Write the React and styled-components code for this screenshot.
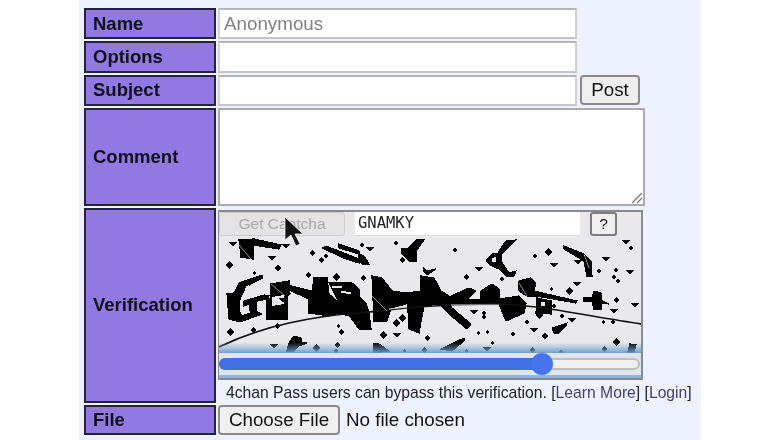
import React from "react";
import styled, { createGlobalStyle } from "styled-components";

const Global = createGlobalStyle`
  html, body { margin: 0; padding: 0; background: #fff; height: 440px; overflow: hidden; }
  * { box-sizing: border-box; }
`;

const Page = styled.div`
  display: flex;
  padding-left: 79px;
  height: 440px;
  font-family: "Liberation Sans", Arial, sans-serif;
  color: #222;
  position: relative;
`;
const Panel = styled.form`
  width: 622px;
  height: 440px;
  overflow: hidden;
  background: #eef2ff;
  padding: 8px 0 0 5px;
  display: flex;
  flex-direction: column;
  gap: 2px;
  filter: blur(0.4px);
`;
const Row = styled.div`
  display: flex;
  gap: 2px;
  height: ${(p) => p.$h}px;
  flex: none;
`;
const Label = styled.div`
  width: 132px;
  flex: none;
  display: flex;
  align-items: center;
  padding-left: 7px;
  background: #9178e2;
  border: 2px solid #23233a;
  font-size: 18.5px;
  font-weight: 700;
  color: #10101c;
`;
const Input = styled.input`
  width: ${(p) => p.$w}px;
  height: 100%;
  border: 2px solid;
  border-color: #b4b4b4 #cfcfcf #c4c4c4 #d4d4d4;
  background: #fff;
  padding: 0 4px;
  font-family: inherit;
  font-size: 18.8px;
  outline: none;
  &::placeholder { color: #808080; opacity: 1; }
`;
const PostButton = styled.button`
  width: 60px;
  height: 30px;
  margin-left: 1px;
  border: 2px solid #8a8a8a;
  border-radius: 4px;
  background: #efefef;
  font-family: inherit;
  font-size: 18.8px;
  color: #111;
  padding: 0;
`;
const TextArea = styled.div`
  width: 427px;
  height: 98px;
  border: 2px solid #ababab;
  background: #fff;
  position: relative;
`;
const Grip = styled.svg`
  position: absolute;
  right: 0;
  bottom: 0;
`;
const VerifyCell = styled.div`
  display: flex;
  flex-direction: column;
  padding-top: 2px;
`;
const CaptchaBox = styled.div`
  width: 425px;
  height: 173px;
  border: 2px solid #868a90;
  border-left-width: 1px;
  background: #e9e9eb;
  display: flex;
  flex-direction: column;
`;
const CaptchaBar = styled.div`
  display: flex;
  gap: 10px;
  height: 24px;
  flex: none;
`;
const GetButton = styled.button`
  width: 126px;
  height: 24px;
  border: 1px solid #cdcdcd;
  border-radius: 3px;
  background: #e3e3e3;
  color: #a9a9a9;
  font-family: inherit;
  font-size: 15.5px;
  padding: 0;
`;
const CodeInput = styled.input`
  width: 225px;
  height: 24px;
  border: none;
  border-bottom: 1px solid #ddd;
  background: #fff;
  color: #222;
  font-family: "DejaVu Sans Mono", monospace;
  font-size: 15.5px;
  padding: 0 3px;
  outline: none;
`;
const HelpButton = styled.button`
  width: 27px;
  height: 24px;
  border: 2px solid #7d7d7d;
  border-radius: 3px;
  background: #efefef;
  font-family: inherit;
  font-size: 15.5px;
  color: #111;
  padding: 0;
`;
const CaptchaImage = styled.svg`
  display: block;
  width: 422px;
  height: 115px;
  flex: none;
  margin-top: 2px;
`;
const SliderZone = styled.div`
  flex: 1;
  padding: 5px 1px 0 0;
  background: linear-gradient(#dfe5ec 0 22px, #8fb5d9 22px);
`;
const Track = styled.div`
  height: 12px;
  border: 2px solid #bdbdbd;
  border-radius: 6px;
  background: #efefef;
  position: relative;
`;
const Fill = styled.div`
  position: absolute;
  left: -2px;
  top: -2px;
  bottom: -2px;
  background: #4170e4;
  border-radius: 6px 0 0 6px;
`;
const Thumb = styled.div`
  position: absolute;
  top: 50%;
  width: 22px;
  height: 22px;
  margin: -11px 0 0 -11px;
  border-radius: 50%;
  background: #4574ee;
`;
const Note = styled.div`
  font-size: 15.7px;
  line-height: 20px;
  margin: 3px 0 0 8px;
  white-space: nowrap;
  color: #222;
`;
const NoteLink = styled.a`
  color: #3f3f72;
`;
const FileButton = styled.button`
  width: 122px;
  height: 30px;
  border: 2px solid #8a8a8a;
  border-radius: 4px;
  background: #efefef;
  font-family: inherit;
  font-size: 18.8px;
  color: #111;
  padding: 0;
`;
const FileCell = styled.div`
  display: flex;
  align-items: center;
  gap: 6px;
  font-size: 18.8px;
  color: #111;
`;
const Cursor = styled.svg`
  position: absolute;
  left: 282px;
  top: 215px;
`;

const blobs = [
  "238,240 253,239 280,245 278,249 252,245 252,259 240,257",
  "226,294 233,293 238,283 261,275 262,278 245,286 239,299 238,311 241,316 255,311 261,314 239,322 228,319",
  "243,301 263,295 268,296 267,299 256,301 255,314 250,316 248,304 243,306",
  "270,284 288,281 289,294 286,296 286,319 266,319 266,299 270,299",
  "290,286 311,291 313,278 326,278 328,294 338,303 358,314 358,319 338,313 328,316 308,313 308,299 290,291",
  "328,283 351,283 358,289 358,303 338,303",
  "338,303 358,296 365,303 368,313 370,329 358,329 350,318",
  "371,276 381,278 391,291 405,293 405,304 390,308 386,321 373,321",
  "420,276 433,278 440,291 448,296 450,304 451,308 470,324 466,329 448,314 438,304 423,306 421,316 418,333 408,329 406,293 420,291",
  "450,296 468,288 475,291 466,299 480,300 480,304 450,304",
  "480,291 491,284 498,289 498,304 480,304",
  "401,249 408,248 415,240 423,240 415,251 415,261 408,261 401,254",
  "321,248 325,246 358,259 358,263 345,259",
  "338,244 358,251 358,254 338,248",
  "358,254 363,256 368,264 361,264 358,261",
  "485,261 491,254 498,253 498,269 491,266",
  "498,251 505,241 515,240 506,249 500,254 500,261 508,273 515,271 513,276 505,276 498,268",
  "563,246 568,248 583,254 590,261 591,276 586,276 583,261 563,249",
  "518,281 530,278 535,283 533,291 576,301 575,303 535,296 526,296 518,291",
  "498,299 518,296 525,303 523,313 505,321 498,304",
  "536,298 550,301 550,314 535,313",
  "583,298 591,298 593,291 600,293 601,301 608,304 600,303 600,309 593,309 591,301 583,301",
  "551,328 566,323 565,326 558,333 553,333",
  "288,343 293,336 300,338 300,343 306,343 298,346 293,351 286,351",
  "440,349 463,338 464,340 451,351",
  "373,344 378,344 388,351 373,353",
  "423,268 426,271 435,269 426,275 423,272",
  "627,352 629,344 635,345 633,352",
];
const holes = [
  "271,297 283,295 283,304 271,306",
  "331,286 341,286 341,288 331,288",
  "340,291 350,292 350,294 340,293",
  "540,302 544,302 544,306 540,306",
  "491,258 495,257 495,262 491,262",
];
const diamonds = [
  [228, 265, 4], [277, 268, 3.5], [311, 253, 3], [307, 275, 3], [335, 277, 4], [362, 278, 3],
  [229, 332, 4], [252, 330, 3], [276, 326, 3], [337, 326, 2], [340, 332, 3], [315, 348, 4],
  [336, 345, 3], [335, 351, 2.5], [325, 256, 2.5], [320, 260, 3], [253, 273, 2], [248, 283, 3],
  [361, 245, 2.5], [395, 243, 2.5], [401, 260, 3], [454, 250, 2.5], [465, 277, 3],
  [401, 318, 4], [395, 323, 4], [382, 335, 4], [426, 338, 3], [483, 313, 2.5], [483, 317, 2.5],
  [477, 333, 2], [486, 332, 2], [491, 343, 2], [423, 350, 3], [403, 351, 2], [465, 351, 2],
  [547, 252, 4], [534, 256, 2.5], [630, 248, 2.5], [598, 271, 2.5], [615, 270, 2.5],
  [613, 277, 2.5], [617, 281, 2.5], [501, 279, 2.5], [568, 291, 4], [550, 289, 2],
  [615, 300, 3], [538, 315, 4], [553, 306, 2.5], [561, 316, 2.5], [526, 322, 2.5],
  [544, 336, 3.5], [602, 322, 2], [612, 322, 2.5], [512, 334, 2.5], [615, 342, 4],
  [531, 350, 3], [603, 349, 3], [560, 352, 2.5],
];
const triangles = [
  [232, 244], [285, 246], [271, 258], [273, 346], [369, 249], [478, 269], [396, 335], [473, 312],
  [486, 349], [553, 265], [577, 262], [605, 259], [625, 242], [629, 272], [576, 284], [634, 305],
  [613, 311], [571, 320], [533, 330], [282, 300],
];

function CaptchaArt() {
  return (
    <CaptchaImage viewBox="218 238 422 115" preserveAspectRatio="none">
      <defs>
        <linearGradient id="fade" x1="0" y1="0" x2="0" y2="1">
          <stop offset="0" stopColor="#7fa9d2" stopOpacity="0" />
          <stop offset="1" stopColor="#6a9ccb" stopOpacity="0.95" />
        </linearGradient>
      </defs>
      <rect x="218" y="238" width="422" height="115" fill="#e9e9eb" />
      <g shapeRendering="crispEdges">
        {blobs.map((p) => (
          <polygon key={p} points={p} fill="#000" stroke="#000" strokeWidth="1.2" />
        ))}
        {holes.map((p) => (
          <polygon key={p} points={p} fill="#e9e9eb" />
        ))}
        {diamonds.map(([x, y, r]) => (
          <polygon key={`${x}-${y}`} points={`${x},${y - r} ${x + r},${y} ${x},${y + r} ${x - r},${y}`} fill="#000" />
        ))}
        {triangles.map(([x, y]) => (
          <polygon key={`${x}-${y}`} points={`${x - 4},${y - 2} ${x + 4},${y - 2} ${x},${y + 3}`} fill="#000" />
        ))}
      </g>
      <path
        d="M218 347 C245 334 265 328 288 323 S340 314 358 313 S395 307 450 305 S500 304 525 306 S600 318 641 324"
        fill="none"
        stroke="#111"
        strokeWidth="1.6"
      />
      <path d="M238 245 L250 259 M270 284 L284 296 M371 296 L386 311 M518 283 L526 296 M583 254 L588 268" stroke="#bbb" strokeWidth="0.8" />
      <path d="M450 305 L498 305 M388 309 L406 307" stroke="#cfcfcf" strokeWidth="1" />
      <rect x="218" y="342" width="422" height="11" fill="url(#fade)" />
    </CaptchaImage>
  );
}

export default function App() {
  return (
    <>
      <Global />
      <Page>
        <Panel onSubmit={(e) => e.preventDefault()}>
          <Row $h={31.4}>
            <Label>Name</Label>
            <Input $w={359} placeholder="Anonymous" />
          </Row>
          <Row $h={31.4}>
            <Label>Options</Label>
            <Input $w={359} />
          </Row>
          <Row $h={31.4}>
            <Label>Subject</Label>
            <Input $w={359} />
            <PostButton type="button">Post</PostButton>
          </Row>
          <Row $h={97.4}>
            <Label>Comment</Label>
            <TextArea>
              <Grip width="14" height="14" viewBox="0 0 14 14">
                <path d="M3 13 L13 3 M8 13 L13 8" stroke="#777" strokeWidth="1.3" fill="none" />
              </Grip>
            </TextArea>
          </Row>
          <Row $h={195.6}>
            <Label>Verification</Label>
            <VerifyCell>
              <CaptchaBox>
                <CaptchaBar>
                  <GetButton type="button" disabled>Get Captcha</GetButton>
                  <CodeInput defaultValue="GNAMKY" />
                  <HelpButton type="button">?</HelpButton>
                </CaptchaBar>
                <CaptchaArt />
                <SliderZone>
                  <Track>
                    <Fill style={{ width: `${(324 / 421) * 100}%` }} />
                    <Thumb style={{ left: `${(324 / 421) * 100}%` }} />
                  </Track>
                </SliderZone>
              </CaptchaBox>
              <Note>
                4chan Pass users can bypass this verification. [<NoteLink>Learn More</NoteLink>] [<NoteLink>Login</NoteLink>]
              </Note>
            </VerifyCell>
          </Row>
          <Row $h={30}>
            <Label>File</Label>
            <FileCell>
              <FileButton type="button">Choose File</FileButton>
              <span>No file chosen</span>
            </FileCell>
          </Row>
        </Panel>
        <Cursor width="22" height="34" viewBox="0 0 22 34">
          <path d="M3 2 L3 25 L9 20 L14 31 L18 29 L13 19 L21 19 Z" fill="#111" stroke="#fff" strokeWidth="1" strokeOpacity="0.7" />
        </Cursor>
      </Page>
    </>
  );
}
